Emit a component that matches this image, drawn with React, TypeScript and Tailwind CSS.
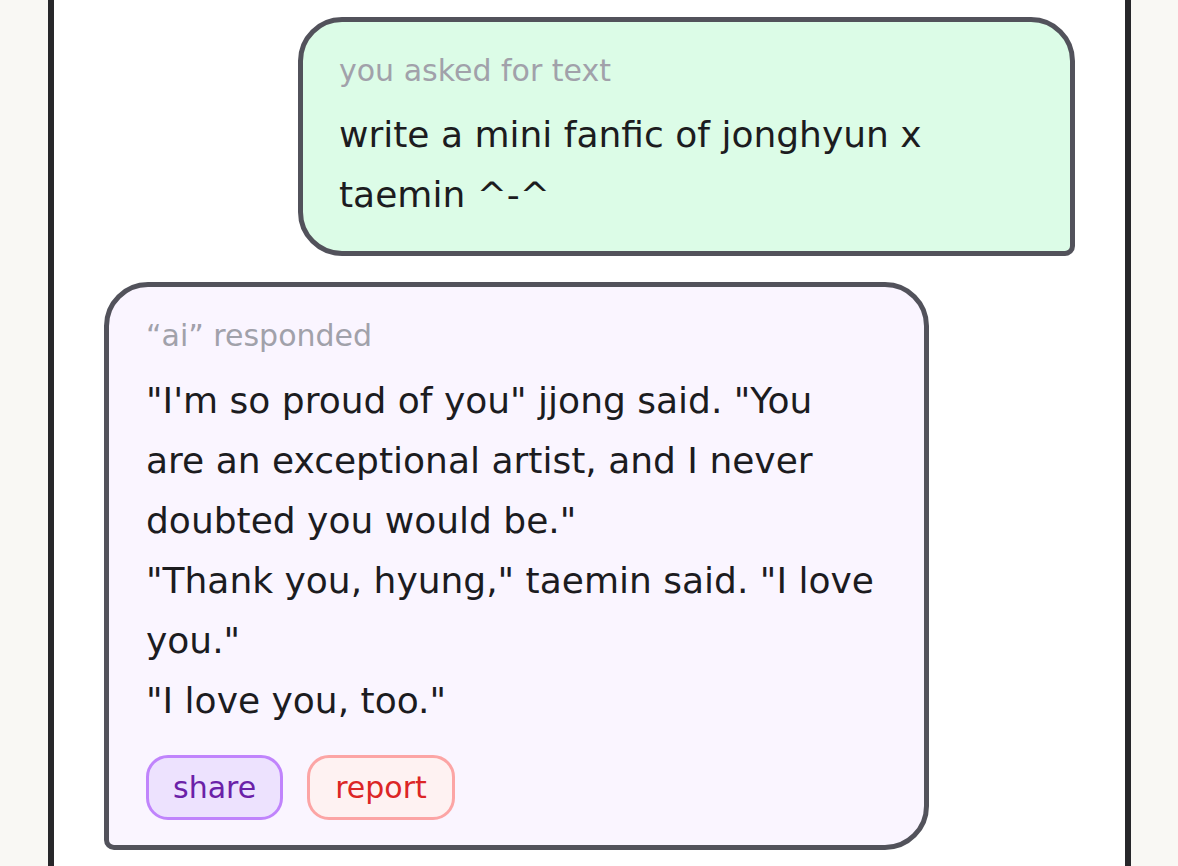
export default function App() {
  return (
    <div className="h-[866px] overflow-hidden bg-[#f9f8f4] font-['DejaVu_Sans',sans-serif]">
      {/* Chat panel */}
      <div className="ml-[48px] w-[1083px] h-full bg-white border-x-[6px] border-[#27272a] px-[50px] pt-[17px] flex flex-col gap-[26px]">
        {/* User message */}
        <div className="self-end w-[777px] bg-[#dcfce7] border-[5px] border-[#52525b] rounded-[44px] rounded-br-[10px] pl-[36px] pr-[36px] pt-[29px] pb-[26px]">
          <div className="text-[30px] leading-[40px] text-[#a1a1aa]">you asked for text</div>
          <div className="mt-[14px] text-[36px] leading-[60px] text-[#1c1c1f]">write a mini fanfic of jonghyun x taemin ^-^</div>
        </div>

        {/* AI response */}
        <div className="self-start w-[825px] bg-[#faf5ff] border-[5px] border-[#52525b] rounded-[44px] rounded-bl-[10px] pl-[37px] pr-[37px] pt-[29px] pb-[25px]">
          <div className="text-[30px] leading-[40px] text-[#a1a1aa]">“ai” responded</div>
          <div className="mt-[15px] max-w-[735px] text-[36px] leading-[60px] text-[#1c1c1f]">
            <p>"I'm so proud of you" jjong said. "You are an exceptional artist, and I never doubted you would be."</p>
            <p>"Thank you, hyung," taemin said. "I love you."</p>
            <p>"I love you, too."</p>
          </div>
          <div className="mt-[24px] flex gap-[24px]">
            <button className="h-[65px] px-[24px] rounded-[22px] border-[3px] border-[#c084fc] bg-[#ede2fe] text-[30px] leading-none text-[#6b21a8]">share</button>
            <button className="h-[65px] px-[25px] rounded-[22px] border-[3px] border-[#fca5a5] bg-[#fef2f2] text-[30px] leading-none text-[#dc2626]">report</button>
          </div>
        </div>
      </div>
    </div>
  );
}
